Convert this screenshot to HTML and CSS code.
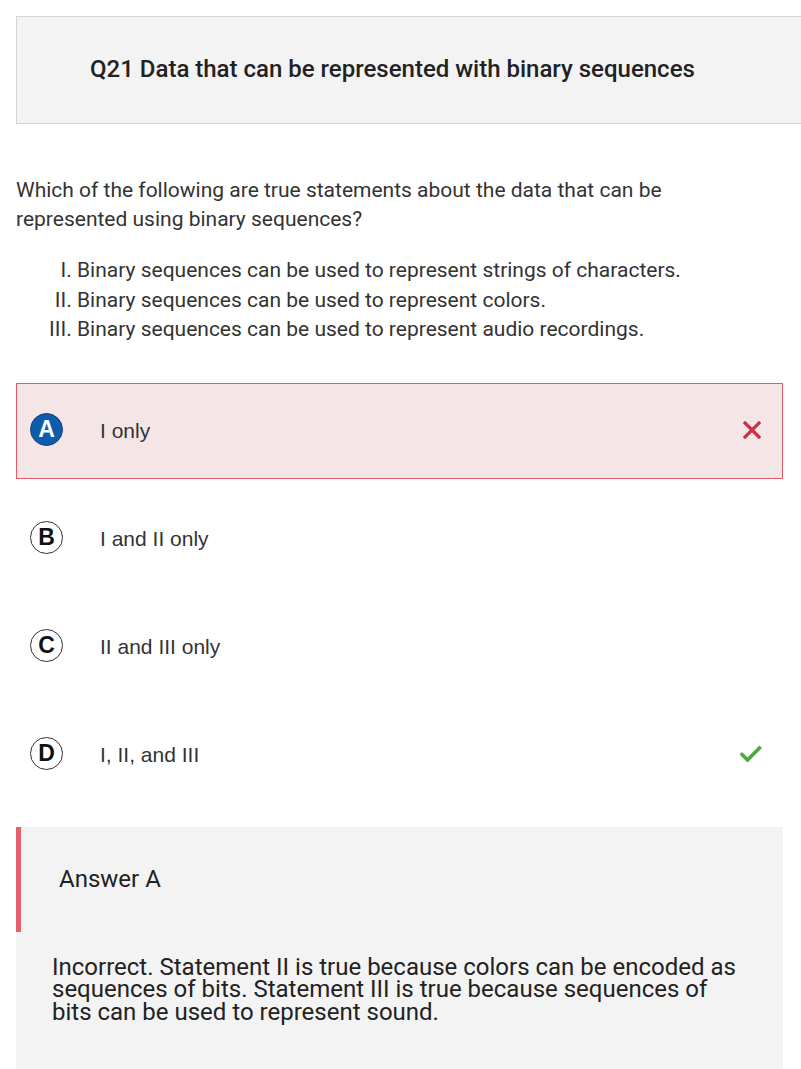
FILE: index.html
```html
<!DOCTYPE html>
<html lang="en">
<head>
<meta charset="utf-8">
<title>Q21</title>
<link rel="stylesheet" href="styles.css">
</head>
<body>
<div class="page">
  <div class="title-box">
    <h1 class="title">Q21 Data that can be represented with binary sequences</h1>
  </div>

  <p class="question">Which of the following are true statements about the data that can be represented using binary sequences?</p>

  <ol class="statements">
    <li>Binary sequences can be used to represent strings of characters.</li>
    <li>Binary sequences can be used to represent colors.</li>
    <li>Binary sequences can be used to represent audio recordings.</li>
  </ol>

  <div class="options">
    <div class="option wrong">
      <span class="badge selected">A</span>
      <span class="option-text">I only</span>
      <svg class="mark" width="18" height="18" viewBox="0 0 18 18"><path d="M2 2 L16 16 M16 2 L2 16" stroke="#c9304a" stroke-width="3.2" stroke-linecap="square" fill="none"/></svg>
    </div>
    <div class="option">
      <span class="badge">B</span>
      <span class="option-text">I and II only</span>
    </div>
    <div class="option">
      <span class="badge">C</span>
      <span class="option-text">II and III only</span>
    </div>
    <div class="option">
      <span class="badge">D</span>
      <span class="option-text">I, II, and III</span>
      <svg class="mark check" width="22" height="18" viewBox="0 0 22 18"><path d="M2 9.5 L7.5 15 L19.5 3" stroke="#4caa3c" stroke-width="3.6" stroke-linecap="square" fill="none"/></svg>
    </div>
  </div>

  <div class="answer">
    <div class="answer-head">Answer A</div>
    <p class="answer-body">Incorrect. Statement II is true because colors can be encoded as sequences of bits. Statement III is true because sequences of bits can be used to represent sound.</p>
  </div>
</div>
</body>
</html>
```

FILE: styles.css
```css
html, body {
  margin: 0;
  padding: 0;
  overflow: hidden;
  background: #ffffff;
}

.page {
  padding: 16px 0 0 16px;
  font-family: Roboto, "Liberation Sans", sans-serif;
  color: #333333;
}

.title-box {
  width: 800px;
  height: 106px;
  box-sizing: content-box;
  background: #f3f3f3;
  border: 1px solid #d4d4d6;
  display: flex;
  align-items: center;
}

.title {
  margin: 0 0 3px 73px;
  font-size: 24px;
  font-weight: 500;
  color: #222222;
  line-height: 30px;
}

.question {
  width: 700px;
  margin: 52px 0 0 0;
  font-size: 21px;
  line-height: 29px;
  color: #333333;
}

.statements {
  list-style-type: upper-roman;
  margin: 22px 0 0 0;
  padding-left: 61px;
  font-size: 21px;
  line-height: 29.5px;
  color: #333333;
}

.options {
  margin-top: 38px;
  width: 767px;
  display: flex;
  flex-direction: column;
  gap: 12px;
}

.option {
  height: 94px;
  border: 1px solid transparent;
  display: flex;
  align-items: center;
  padding-left: 13px;
  padding-right: 20px;
  font-family: "Liberation Sans", Arial, sans-serif;
}

.option.wrong {
  background: #f4e6e7;
  border-color: #e35b6b;
}

.badge {
  width: 31px;
  height: 31px;
  border-radius: 50%;
  border: 1px solid #333333;
  background: #ffffff;
  color: #111111;
  font-weight: bold;
  font-size: 23px;
  display: flex;
  align-items: center;
  justify-content: center;
  flex: none;
  margin-bottom: 2px;
}

.badge.selected {
  background: #0b5cad;
  color: #ffffff;
  border-color: #1c3f70;
}

.option-text {
  margin-left: 37px;
  font-size: 21px;
  color: #333333;
  flex: 1;
}

.mark {
  flex: none;
  margin-right: 1px;
  margin-bottom: 2px;
}

.mark.check {
  margin-right: 0;
}

.answer {
  margin-top: 24px;
  width: 767px;
  height: 260px;
  background: #f3f3f3;
}

.answer-head {
  height: 105px;
  border-left: 5px solid #e5606d;
  display: flex;
  align-items: center;
  padding-left: 38px;
  font-size: 24px;
  color: #222222;
}

.answer-body {
  margin: 24px 0 0 0;
  padding-left: 36px;
  width: 692px;
  font-size: 24px;
  line-height: 22.5px;
  color: #222222;
}
```
